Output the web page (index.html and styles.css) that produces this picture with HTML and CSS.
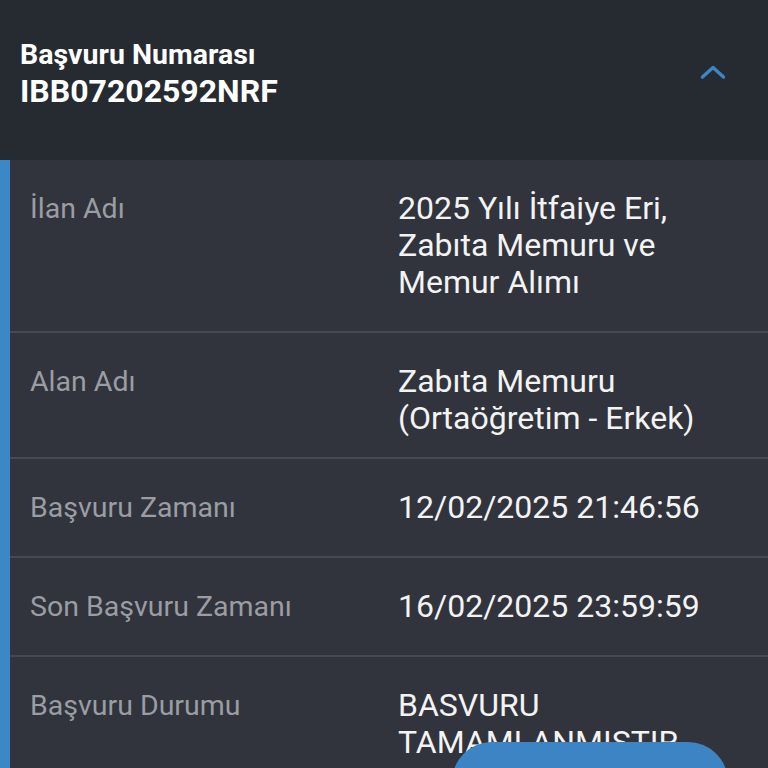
FILE: index.html
```html
<!DOCTYPE html>
<html lang="tr">
<head>
<meta charset="utf-8">
<title>Başvuru</title>
<link rel="stylesheet" href="styles.css">
</head>
<body>
<div class="screen">
  <header class="head">
    <div class="head-text">
      <div>Başvuru Numarası</div>
      <div class="head-num">IBB07202592NRF</div>
    </div>
    <svg class="chev" width="26" height="16" viewBox="0 0 26 16">
      <path d="M2.5 13 L13 3.5 L23.5 13" fill="none" stroke="#3d86c6" stroke-width="3.4" stroke-linecap="round" stroke-linejoin="round"/>
    </svg>
  </header>
  <section class="card">
    <div class="row">
      <div class="label">İlan Adı</div>
      <div class="value">2025 Yılı İtfaiye Eri, Zabıta Memuru ve Memur Alımı</div>
    </div>
    <div class="row row-tight">
      <div class="label">Alan Adı</div>
      <div class="value">Zabıta Memuru (Ortaöğretim - Erkek)</div>
    </div>
    <div class="row">
      <div class="label">Başvuru Zamanı</div>
      <div class="value">12/02/2025 21:46:56</div>
    </div>
    <div class="row">
      <div class="label">Son Başvuru Zamanı</div>
      <div class="value">16/02/2025 23:59:59</div>
    </div>
    <div class="row">
      <div class="label">Başvuru Durumu</div>
      <div class="value">BASVURU TAMAMLANMISTIR</div>
    </div>
  </section>
  <div class="fab"></div>
</div>
</body>
</html>
```

FILE: styles.css
```css
html, body {
  margin: 0;
  padding: 0;
  background: #31343c;
}
.screen {
  position: relative;
  width: 768px;
  height: 768px;
  overflow: hidden;
  font-family: Roboto, "Noto Sans", sans-serif;
  background: #31343c;
}
.head {
  height: 160px;
  box-sizing: border-box;
  background: #262a31;
  padding: 36px 42px 0 20px;
  display: flex;
  justify-content: space-between;
  align-items: flex-start;
}
.head-text {
  color: #ffffff;
  font-weight: 700;
  font-size: 28.5px;
  line-height: 37px;
}
.head-num {
  font-size: 32px;
}
.chev {
  margin-top: 28px;
}
.card {
  border-left: 10px solid #3b87c7;
}
.row {
  display: grid;
  grid-template-columns: 368px 1fr;
  padding: 30px 40px 30px 20px;
  border-bottom: 2px solid #454951;
  line-height: 37px;
}
.row-tight {
  padding-bottom: 20px;
}
.label {
  color: #9a9da3;
  font-size: 28.5px;
}
.value {
  color: #f3f3f3;
  font-size: 32px;
}
.fab {
  position: absolute;
  left: 452px;
  top: 742px;
  width: 276px;
  height: 90px;
  border-radius: 40px;
  background: #3d84c4;
}
```
